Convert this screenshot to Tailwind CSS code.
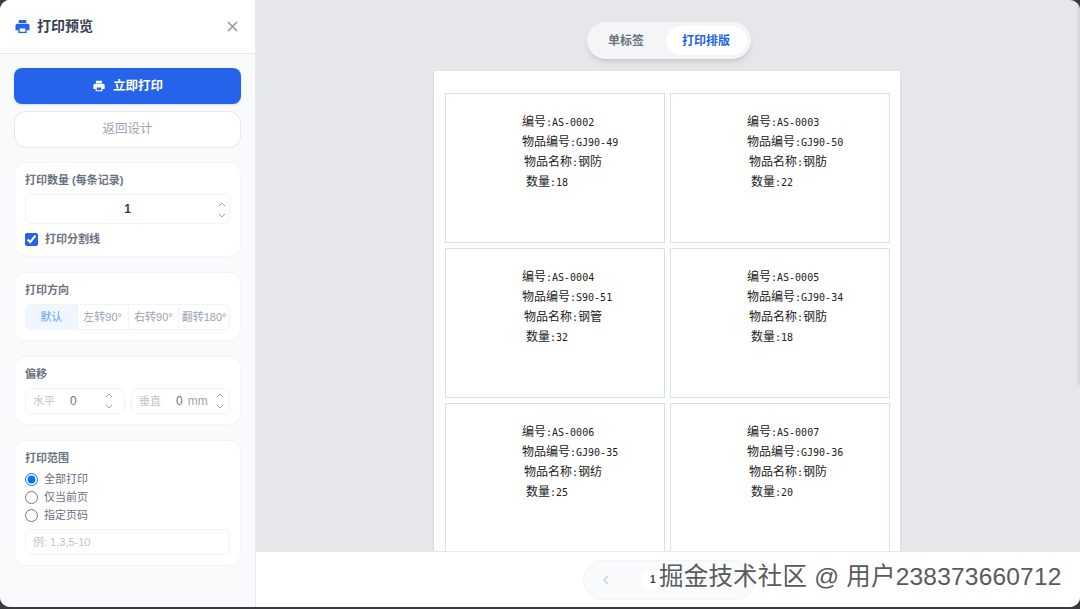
<!doctype html>
<html lang="zh-CN">
<head>
    <meta charset="UTF-8">
    <title>打印预览</title>
    <script src="https://cdn.jsdelivr.net/npm/@tailwindcss/browser@4"></script>
</head>
<body class="bg-[#3a3a40] w-[1080px] h-[609px] overflow-hidden font-['Liberation_Sans','Noto_Sans_CJK_SC',sans-serif]">
<div class="relative flex w-[1080px] h-[607px] rounded-[10px] overflow-hidden bg-[#e5e7eb]">

    <aside class="w-[256px] shrink-0 flex flex-col bg-[#f8fafc] border-r border-[#e5e7eb]">
        <div class="h-[54px] shrink-0 flex items-center justify-between pl-[15px] pr-[17px] bg-white border-b border-[#e5e7eb]">
            <div class="flex items-center gap-[7px]">
                <svg class="w-[15px] h-[15px]" viewBox="0 0 16 16" fill="#2563eb"><path fill-rule="evenodd" d="M4 1h8v3.200H4zM2.500 5h11a2 2 0 0 1 2 2v5h-3v3h-9v-3h-3V7a2 2 0 0 1 2-2zm2.500 5v3.600h6V10z"/></svg>
                <span class="text-[14px] font-bold text-[#374151]">打印预览</span>
            </div>
            <svg class="w-[11px] h-[11px]" viewBox="0 0 12 12" stroke="#9ca3af" stroke-width="1.800" fill="none"><path d="M1 1l10 10M11 1L1 11"/></svg>
        </div>

        <div class="flex flex-col px-[14px] pt-[14px]">
            <button class="h-[36px] flex items-center justify-center gap-[8px] rounded-lg bg-[#2563eb] text-white text-[12.500px] font-bold shadow-sm pl-[1px]">
                <svg class="w-[12px] h-[12px]" viewBox="0 0 16 16" fill="#fff"><path fill-rule="evenodd" d="M4 1h8v3.200H4zM2.500 5h11a2 2 0 0 1 2 2v5h-3v3h-9v-3h-3V7a2 2 0 0 1 2-2zm2.500 5v3.600h6V10z"/></svg>
                立即打印
            </button>
            <button class="h-[37px] mt-[7px] rounded-xl bg-white border border-[#e5e7eb] text-[12.500px] text-[#9ca3af]">返回设计</button>

            <section class="mt-[14px] h-[95px] rounded-xl bg-white border border-[#f1f5f9] px-[10px] pt-[9px]">
                <h3 class="text-[11px] leading-4 font-bold text-[#6b7280]">打印数量 (每条记录)</h3>
                <div class="relative mt-[6px] h-[30px] flex items-center justify-center rounded-md border border-[#f1f3f5] bg-white text-[12px] font-bold text-[#374151]">
                    1
                    <svg class="absolute right-[3px] top-[7px] w-[8px] h-[16px]" viewBox="0 0 8 16" stroke="#9ca3af" fill="none"><path d="M1 4l3-3 3 3M1 12l3 3 3-3"/></svg>
                </div>
                <label class="flex items-center gap-[7px] mt-[7px] text-[11px] font-bold text-[#6b7280]">
                    <input type="checkbox" checked class="w-[13px] h-[13px] accent-[#2563eb]">
                    打印分割线
                </label>
            </section>

            <section class="mt-[15px] h-[69px] rounded-xl bg-white border border-[#f1f5f9] px-[10px] pt-[9px]">
                <h3 class="text-[11px] leading-4 font-bold text-[#6b7280]">打印方向</h3>
                <div class="mt-[6px] h-[26px] grid grid-cols-4 rounded-md border border-[#f1f3f5] text-[11px] text-[#9ca3af] overflow-hidden">
                    <span class="flex items-center justify-center bg-[#eff6ff] text-[#60a5fa]">默认</span>
                    <span class="flex items-center justify-center border-l border-[#f1f3f5]">左转90°</span>
                    <span class="flex items-center justify-center border-l border-[#f1f3f5]">右转90°</span>
                    <span class="flex items-center justify-center border-l border-[#f1f3f5] whitespace-nowrap">翻转180°</span>
                </div>
            </section>

            <section class="mt-[15px] h-[69px] rounded-xl bg-white border border-[#f1f5f9] px-[10px] pt-[9px]">
                <h3 class="text-[11px] leading-4 font-bold text-[#6b7280]">偏移</h3>
                <div class="mt-[6px] flex gap-[6px] text-[11px]">
                    <div class="relative w-[100px] h-[26px] flex items-center rounded-md border border-[#f1f3f5] pl-[7px] text-[#c0c4cc]">
                        水平<span class="ml-[15px] text-[12px] text-[#6b7280]">0</span>
                        <svg class="absolute right-[11px] top-[4px] w-[8px] h-[16px]" viewBox="0 0 8 16" stroke="#9ca3af" fill="none"><path d="M1 4l3-3 3 3M1 12l3 3 3-3"/></svg>
                    </div>
                    <div class="relative w-[99px] h-[26px] flex items-center rounded-md border border-[#f1f3f5] pl-[7px] text-[#c0c4cc]">
                        垂直<span class="ml-[15px] text-[12px] text-[#6b7280]">0</span><span class="ml-[5px] text-[12px] text-[#9ca3af]">mm</span>
                        <svg class="absolute right-[5px] top-[4px] w-[8px] h-[16px]" viewBox="0 0 8 16" stroke="#9ca3af" fill="none"><path d="M1 4l3-3 3 3M1 12l3 3 3-3"/></svg>
                    </div>
                </div>
            </section>

            <section class="mt-[15px] h-[126px] rounded-xl bg-white border border-[#f1f5f9] px-[10px] pt-[9px]">
                <h3 class="text-[11px] leading-4 font-bold text-[#6b7280]">打印范围</h3>
                <div class="mt-[7px] flex flex-col gap-[5px] text-[11px] text-[#6b7280]">
                    <label class="h-[13px] flex items-center gap-[6px]"><input type="radio" name="range" checked class="w-[13px] h-[13px] m-0">全部打印</label>
                    <label class="h-[13px] flex items-center gap-[6px]"><input type="radio" name="range" class="w-[13px] h-[13px] m-0">仅当前页</label>
                    <label class="h-[13px] flex items-center gap-[6px]"><input type="radio" name="range" class="w-[13px] h-[13px] m-0">指定页码</label>
                </div>
                <div class="mt-[7px] h-[26px] flex items-center rounded-md border border-[#f1f3f5] pl-[7px] text-[11px] text-[#c0c4cc]">例: 1,3,5-10</div>
            </section>
        </div>
    </aside>

    <main class="flex-1 min-w-0 flex flex-col">
        <div class="flex-1 min-h-0 overflow-hidden flex flex-col items-center pr-[3px]">
            <div class="mt-[22px] ml-[4px] w-[164px] h-[37px] shrink-0 flex items-center rounded-full bg-[#f4f5f7] shadow-md pr-[4px] text-[12px] font-bold">
                <span class="w-[79px] text-center text-[#6b7280]">单标签</span>
                <span class="w-[81px] h-[29px] flex items-center justify-center rounded-full bg-white text-[#2563eb]">打印排版</span>
            </div>
            <div class="mt-[12px] w-[466px] shrink-0 bg-white pt-[22px] pl-[11px] shadow-sm">
                <div id="sheet" class="grid grid-cols-[220px_220px] auto-rows-[150px] gap-x-[5px] gap-y-[5px]"></div>
            </div>
        </div>
        <div class="relative z-10 h-[56px] shrink-0 flex items-center bg-white border-t border-[#e5e7eb] pl-[327px]">
            <div class="w-[172px] h-[40px] flex items-center rounded-full bg-[#f8fafc] border border-[#f1f5f9] pl-[18px]">
                <svg class="w-[8px] h-[10px]" viewBox="0 0 8 10" stroke="#cbd5e1" stroke-width="1.500" fill="none"><path d="M6 1L2 5l4 4"/></svg>
                <span class="ml-[32px] w-[30px] h-[20px] flex items-center pl-[8px] rounded bg-white text-[10px] font-bold text-[#374151]">1</span>
            </div>
        </div>
    </main>

    <div class="absolute right-0 top-0 w-[3px] h-[385px] bg-[#d9dbdf]"></div>
    <div class="absolute z-20 left-[659px] top-[562px] whitespace-nowrap text-[24.500px] tracking-[0.2px] leading-[30px] text-[#5a5a5a] [text-shadow:1px_1px_1px_#ffffff]">掘金技术社区 @ 用户238373660712</div>
</div>
<script>
    // 标签数据
    const labels = [
        ['AS-0002', 'GJ90-49', '钢防', '18'],
        ['AS-0003', 'GJ90-50', '钢肪', '22'],
        ['AS-0004', 'S90-51', '钢管', '32'],
        ['AS-0005', 'GJ90-34', '钢肪', '18'],
        ['AS-0006', 'GJ90-35', '钢纺', '25'],
        ['AS-0007', 'GJ90-36', '钢防', '20'],
    ];
    document.getElementById('sheet').innerHTML = labels.map(l => `
        <div class="border border-[#d5e2f5] pt-[18px] pl-[76.500px] text-[12px] text-[#222] whitespace-nowrap flex flex-col">
            <div class="h-[20px] leading-[20px]">编号<span class="font-['DejaVu_Sans_Mono'] text-[10px]">:${ l[0] }</span></div>
            <div class="h-[20px] leading-[20px]">物品编号<span class="font-['DejaVu_Sans_Mono'] text-[10px]">:${ l[1] }</span></div>
            <div class="h-[20px] leading-[20px] pl-[2px]">物品名称<span class="font-['DejaVu_Sans_Mono'] text-[10px]">:</span>${ l[2] }</div>
            <div class="h-[20px] leading-[20px] pl-[4px]">数量<span class="font-['DejaVu_Sans_Mono'] text-[10px]">:${ l[3] }</span></div>
        </div>`).join('');
</script>
</body>
</html>
